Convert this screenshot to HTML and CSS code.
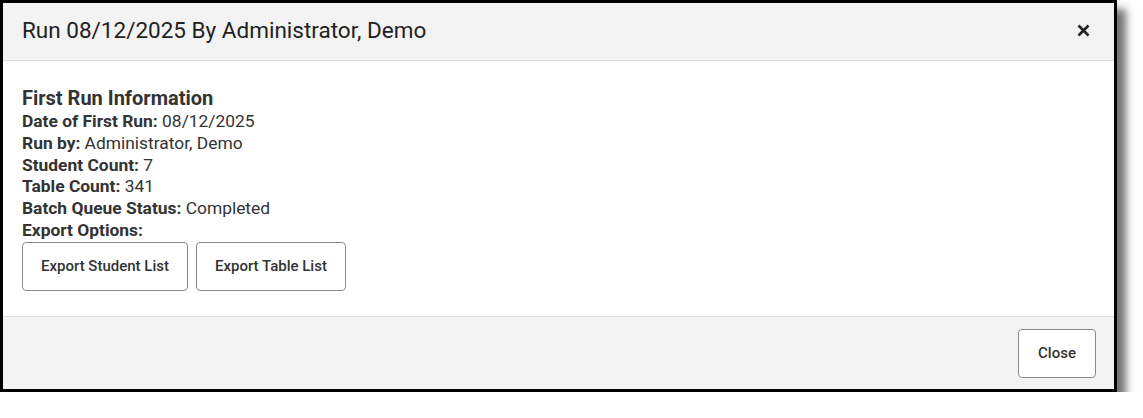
FILE: index.html
```html
<!DOCTYPE html>
<html>
<head>
<meta charset="utf-8">
<link rel="stylesheet" href="styles.css">
</head>
<body>
<div class="dialog">
  <div class="dialog-header">
    <h1 class="dialog-title">Run 08/12/2025 By Administrator, Demo</h1>
    <button class="close-x" aria-label="Close">
      <svg width="13" height="13" viewBox="0 0 13 13"><path d="M1.5 1.5L11.5 11.5M11.5 1.5L1.5 11.5" stroke="#222" stroke-width="2.6" stroke-linecap="butt"/></svg>
    </button>
  </div>
  <div class="dialog-body">
    <h2 class="section-title">First Run Information</h2>
    <div class="info-line"><span class="label">Date of First Run:</span> 08/12/2025</div>
    <div class="info-line"><span class="label">Run by:</span> Administrator, Demo</div>
    <div class="info-line"><span class="label">Student Count:</span> 7</div>
    <div class="info-line"><span class="label">Table Count:</span> 341</div>
    <div class="info-line"><span class="label">Batch Queue Status:</span> Completed</div>
    <div class="info-line"><span class="label">Export Options:</span></div>
    <div class="button-row">
      <button class="btn">Export Student List</button>
      <button class="btn">Export Table List</button>
    </div>
  </div>
  <div class="dialog-footer">
    <button class="btn btn-close">Close</button>
  </div>
</div>
</body>
</html>
```
FILE: styles.css
```css
html, body {
  margin: 0;
  padding: 0;
  background: #ffffff;
}
body {
  font-family: Roboto, "Liberation Sans", sans-serif;
  color: #333333;
}
.dialog {
  width: 1111px;
  height: 386px;
  border: 3px solid #000000;
  background: #ffffff;
  box-shadow: 9px 9px 8px rgba(0, 0, 0, 0.55);
  display: flex;
  flex-direction: column;
}
.dialog-header {
  height: 54px;
  background: #f3f3f3;
  border-bottom: 1px solid #dddddd;
  display: flex;
  align-items: center;
  justify-content: space-between;
  padding: 0 24px 3px 19px;
}
.dialog-title {
  margin: 0;
  font-size: 22.5px;
  font-weight: 400;
  color: #222222;
}
.close-x {
  border: none;
  background: none;
  padding: 0;
  display: flex;
  cursor: pointer;
}
.dialog-body {
  flex: 1;
  padding: 26px 19px 0 19px;
}
.section-title {
  margin: 0 0 2px 0;
  font-size: 20px;
  font-weight: 700;
  line-height: 22px;
  color: #333333;
}
.info-line {
  font-size: 17.4px;
  line-height: 21.8px;
}
.label {
  font-weight: 700;
}
.button-row {
  display: flex;
  gap: 8px;
  margin-top: 0;
}
.btn {
  height: 49px;
  padding: 0 18px;
  border: 1px solid #8a8a8a;
  border-radius: 4px;
  background: #ffffff;
  font-family: Roboto, "Liberation Sans", sans-serif;
  font-size: 15px;
  font-weight: 500;
  color: #333333;
}
.dialog-footer {
  height: 72px;
  background: #f3f3f3;
  border-top: 1px solid #dddddd;
  display: flex;
  align-items: center;
  justify-content: flex-end;
  padding: 0 18px;
}
.btn-close {
  width: 78px;
  padding: 0;
}
```
